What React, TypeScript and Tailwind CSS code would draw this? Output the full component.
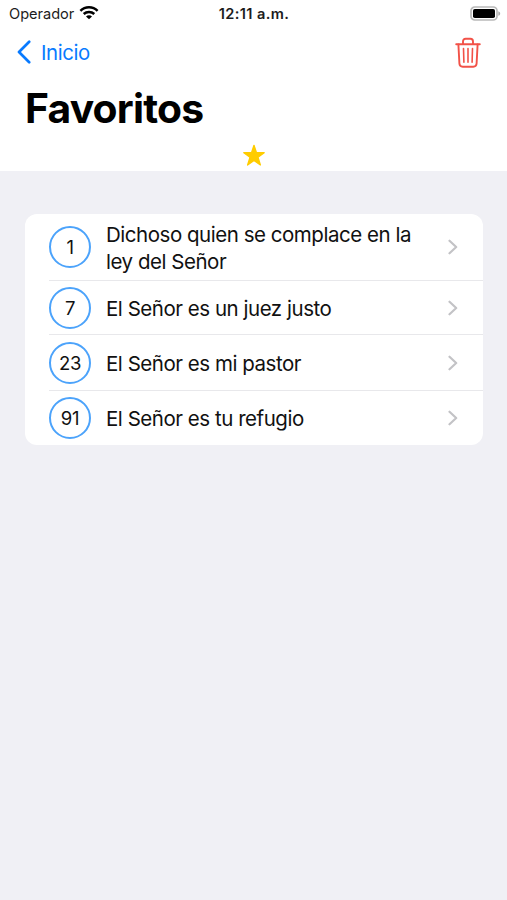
const psalms = [
  { number: 1, lines: ['Dichoso quien se complace en la', 'ley del Señor'], height: 'h-[67px]' },
  { number: 7, lines: ['El Señor es un juez justo'], height: 'h-[54px]' },
  { number: 23, lines: ['El Señor es mi pastor'], height: 'h-[56px]' },
  { number: 91, lines: ['El Señor es tu refugio'], height: 'h-[54px]' },
];

function StatusBar() {
  return (
    <div className="grid h-7 grid-cols-3 items-center pr-[6px] pl-[9px] text-[14.6px] text-[#1c1c1c]">
      <div className="flex items-center gap-[5px]">
        <span className="pt-px tracking-[-0.02px]">Operador</span>
        <svg width="20" height="15" viewBox="0 0 20 15" fill="none" stroke="#000" strokeWidth="2.5" className="-mt-0.5">
          <path d="M1.4 5.8C6.2 1 13.8 1 18.6 5.8" />
          <path d="M4.7 9C7.7 6.2 12.3 6.2 15.3 9" />
          <path d="M10 14.3L7 11.4C8.6 9.8 11.4 9.8 13 11.4Z" fill="#000" stroke="none" />
        </svg>
      </div>
      <span className="-ml-0.5 pt-px text-center font-semibold tracking-[0.36px]">12:11 a.m.</span>
      <svg width="31" height="15" viewBox="0 0 31 15" className="-mt-px justify-self-end">
        <rect x="1" y="1" width="26" height="13" rx="3.8" fill="#fff" stroke="#b9b9b9" strokeWidth="1.7" />
        <rect x="3" y="3" width="22" height="9" rx="1.8" fill="#000" />
        <path d="M28.3 5.2C30.8 6 30.8 9 28.3 9.8Z" fill="#aaa" />
      </svg>
    </div>
  );
}

function TrashIcon() {
  return (
    <svg width="26" height="32" viewBox="0 0 26 32" fill="none" stroke="#f25248" strokeWidth="1.9" strokeLinecap="round" strokeLinejoin="round">
      <path d="M1.2 7.3H24.8" />
      <path d="M8 7V4.4C8 2.8 9 1.8 10.6 1.8H15.4C17 1.8 18 2.8 18 4.4V7" />
      <path d="M3.4 7.5L4.4 26.5C4.5 28.6 5.7 29.7 7.7 29.7H18.3C20.3 29.7 21.5 28.6 21.6 26.5L22.6 7.5" />
      <path d="M8.5 11.5L8.9 25.3M13 11.5V25.3M17.5 11.5L17.1 25.3" strokeWidth="1.6" />
    </svg>
  );
}

export default function App() {
  return (
    <main className="h-[900px] w-full overflow-hidden bg-[#f0f0f5] font-['Inter',sans-serif] text-black">
      <header className="flex h-[171px] flex-col bg-white">
        <StatusBar />
        <nav className="flex h-[50px] items-center justify-between pr-[26px] pl-[17px]">
          <button className="flex items-center gap-[9px] text-[#087aff]">
            <svg width="15" height="24" viewBox="0 0 15 24" fill="none" stroke="currentColor" strokeWidth="2.7" strokeLinecap="round" strokeLinejoin="round" className="-mt-0.5">
              <path d="M12.2 1.8L2 12L12.2 22.2" />
            </svg>
            <span className="text-[20.4px] tracking-[-0.4px]">Inicio</span>
          </button>
          <TrashIcon />
        </nav>
        <h1 className="h-[62px] pl-[25px] text-[40.8px] leading-[60px] font-bold tracking-[-0.8px]">Favoritos</h1>
        <svg width="24" height="24" viewBox="0 0 24 24" className="mx-auto mt-[3px]">
          <path d="M12 2.3L14.5 9.7H22.2L16 14.3L18.4 22L12 17.4L5.6 22L8 14.3L1.8 9.7H9.5Z" fill="#fc0" stroke="#fc0" strokeWidth="1.3" strokeLinejoin="round" />
        </svg>
      </header>

      <ul className="mt-[43px] mr-6 ml-[25px] overflow-hidden rounded-[12px] bg-white pl-6">
        {psalms.map(({ number, lines, height }, index) => (
          <li
            key={number}
            className={`flex items-center pr-[25px] ${height} ${index < psalms.length - 1 ? 'border-b border-[#e8e8eb]' : ''}`}
          >
            <span className="flex size-[42px] shrink-0 items-center justify-center rounded-full border-2 border-[#4ca3fb] pt-0.5 text-[18.5px] tracking-[-0.3px] text-[#111]">
              {number}
            </span>
            <div className="ml-[15px] grow pt-px text-[20.5px] leading-[27px] tracking-[-0.47px] whitespace-nowrap text-[#111]">
              {lines.map((line) => (
                <p key={line}>{line}</p>
              ))}
            </div>
            <svg width="10" height="16" viewBox="0 0 10 16" fill="none" stroke="#c3c3c6" strokeWidth="2.2" strokeLinecap="round" strokeLinejoin="round">
              <path d="M1.5 1.7L8.2 8L1.5 14.3" />
            </svg>
          </li>
        ))}
      </ul>
    </main>
  );
}
